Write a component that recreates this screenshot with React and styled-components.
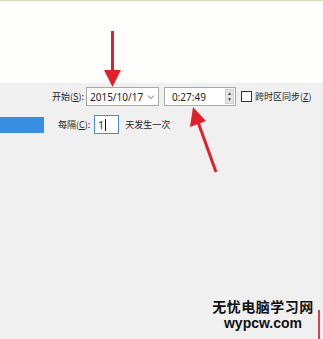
import React from 'react';
import styled, { createGlobalStyle } from 'styled-components';

const Global = createGlobalStyle`
  html, body { margin: 0; padding: 0; }
  body {
    width: 323px;
    height: 339px;
    overflow: hidden;
    font-family: "Noto Sans CJK SC", "Noto Sans", sans-serif;
  }
`;

const Page = styled.div`
  position: relative;
  width: 323px;
  height: 339px;
  overflow: hidden;
  background: #f0f0f0;
`;

const TopArea = styled.div`
  height: 82px;
  background: #fdfefb;
  border-top: 1px solid #cddbb6;
`;

const Panel = styled.div`
  display: flex;
  flex-direction: column;
  padding-top: 4px;
  gap: 9px;
  font-size: 9px;
  color: #1e1e1e;
`;

const Row = styled.div`
  display: flex;
  align-items: center;
  height: ${(p) => p.h || 19}px;
  padding-left: ${(p) => p.pl || 0}px;
`;

const Label = styled.span`
  margin-right: ${(p) => p.mr || 2}px;
  white-space: nowrap;
  u { text-decoration: underline; }
`;

const Field = styled.div`
  display: flex;
  align-items: center;
  box-sizing: border-box;
  width: ${(p) => p.w}px;
  height: 19px;
  background: #fff;
  border: 1px solid ${(p) => (p.focus ? '#3d8ee0' : '#a9a9a9')};
  padding-left: ${(p) => p.pl || 3}px;
  margin-right: ${(p) => p.mr || 0}px;
  font-size: 10px;
  font-family: "Noto Sans", sans-serif;
  color: #222;
`;

const FieldText = styled.span`
  flex: 1;
`;

const Chevron = styled.svg`
  width: 8px;
  height: 8px;
  margin-right: 3px;
`;

const Spinner = styled.div`
  display: flex;
  flex-direction: column;
  width: 9px;
  height: 15px;
  margin-right: 1px;
  background: #e6e6e6;
  border: 1px solid #d0d0d0;
  box-sizing: border-box;
  align-items: center;
  justify-content: space-around;
  font-size: 5px;
  line-height: 5px;
  color: #444;
`;

const Check = styled.div`
  width: 9px;
  height: 9px;
  border: 1px solid #333;
  background: #fff;
  margin-right: 3px;
`;

const BlueBar = styled.div`
  width: 44px;
  height: 16px;
  background: #3a8fe2;
  margin-right: 14px;
`;

const Caret = styled.span`
  display: inline-block;
  width: 1px;
  height: 12px;
  background: #111;
  margin-left: 1px;
`;

const Watermark = styled.div`
  position: absolute;
  left: 210px;
  top: 298px;
  width: 106px;
  display: flex;
  flex-direction: column;
  align-items: center;
  gap: 1px;
  font-weight: 700;
  color: #111;
`;

const WmCn = styled.div`
  font-size: 14px;
  line-height: 17px;
  height: 17px;
  letter-spacing: 0.5px;
`;

const WmEn = styled.div`
  font-family: "Liberation Sans", "DejaVu Sans", sans-serif;
  font-size: 14px;
  line-height: 14px;
`;

const Overlay = styled.svg`
  position: absolute;
  left: 0;
  top: 0;
  pointer-events: none;
`;

export default function App() {
  return (
    <Page>
      <Global />
      <TopArea />
      <Panel>
        <Row pl={52}>
          <Label>开始(<u>S</u>):</Label>
          <Field w={73} mr={5}>
            <FieldText>2015/10/17</FieldText>
            <Chevron viewBox="0 0 8 8">
              <path d="M1 2.5 L4 5.5 L7 2.5" fill="none" stroke="#666" strokeWidth="1" />
            </Chevron>
          </Field>
          <Field w={72} pl={7} mr={5}>
            <FieldText>0:27:49</FieldText>
            <Spinner>
              <span>▲</span>
              <span>▼</span>
            </Spinner>
          </Field>
          <Check />
          <Label>跨时区同步(<u>Z</u>)</Label>
        </Row>
        <Row>
          <BlueBar />
          <Label mr={4}>每隔(<u>C</u>):</Label>
          <Field w={25} focus mr={6}>
            1<Caret />
          </Field>
          <Label>天发生一次</Label>
        </Row>
      </Panel>
      <Watermark>
        <WmCn>无忧电脑学习网</WmCn>
        <WmEn>wypcw.com</WmEn>
      </Watermark>
      <Overlay width="323" height="339" viewBox="0 0 323 339">
        <line x1="112.5" y1="31" x2="112.5" y2="72" stroke="#e0202a" strokeWidth="3" />
        <polygon points="104,70 121,70 112.5,87" fill="#e0202a" />
        <line x1="216" y1="172" x2="198" y2="122" stroke="#e0202a" strokeWidth="3" />
        <polygon points="193,107 190,127 206,121" fill="#e0202a" />
        <line x1="319" y1="310" x2="319" y2="339" stroke="#d84050" strokeWidth="2" />
      </Overlay>
    </Page>
  );
}
